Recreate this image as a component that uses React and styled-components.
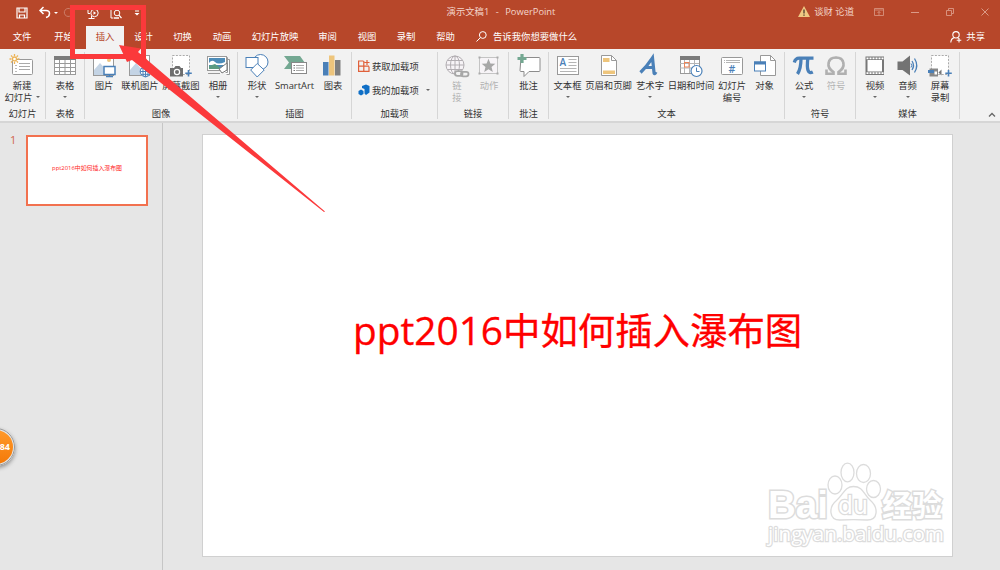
import React from "react";
import styled, { createGlobalStyle } from "styled-components";

const Colors = {
  brand: "#b7472a",
  ribbon: "#f2f2f2",
  canvas: "#e6e6e6",
  line: "#d6d6d6",
  text: "#333",
  muted: "#b3b3b3",
  blue: "#4a80b8",
  grey: "#7c7c7c",
  gold: "#eec57c",
  green: "#74a892",
  mark: "#fb393b",
};

const GlobalStyle = createGlobalStyle`
  * {
    box-sizing: border-box;
  }

  body {
    margin: 0;
    overflow: hidden;
    font-family: "Open Sans", "Noto Sans CJK SC", sans-serif;
    font-size: 9.35px;
    color: ${Colors.text};
  }

  svg {
    display: block;
    flex: none;
    overflow: visible;
  }
`;

const Window = styled.div`
  position: relative;
  display: flex;
  flex-direction: column;
  width: 1000px;
  height: 570px;
  overflow: hidden;
  background: ${Colors.canvas};
`;

const Header = styled.header`
  height: 49px;
  background: ${Colors.brand};
  color: #fff;
`;

const TitleBar = styled.div`
  display: grid;
  grid-template-columns: 1fr auto 1fr;
  height: 26px;
  padding: 0 11px 3px 16px;
  align-items: center;
`;

const QuickAccess = styled.div`
  display: flex;
  align-items: center;
  height: 26px;
`;

const QuickIcon = styled.div`
  margin-left: ${(p) => p.$gap || 0}px;
  opacity: ${(p) => (p.$faint ? 0.3 : 1)};
`;

const DocTitle = styled.div`
  padding: 0 3px 3px 0;
  color: #f3d5cb;
  white-space: pre;
  line-height: 22px;
  word-spacing: 0.8px;
`;

const WindowControls = styled.div`
  display: flex;
  justify-content: flex-end;
  align-items: center;
  color: #db9a87;
`;

const User = styled.div`
  display: flex;
  align-items: center;
  gap: 4px;
  margin-right: 20px;
  padding-bottom: 3px;
  color: #f3d5cb;
  line-height: 22px;
  white-space: nowrap;
`;

const Control = styled.div`
  margin-left: ${(p) => p.$gap || 0}px;
  padding-bottom: 2px;
`;

const Tabs = styled.nav`
  display: flex;
  height: 23px;
  padding-left: 3px;
  line-height: 22px;
`;

const Tab = styled.div`
  width: ${(p) => p.$w}px;
  text-align: center;
  white-space: nowrap;
  color: ${(p) => (p.$active ? Colors.brand : "#fff")};
  background: ${(p) => (p.$active ? Colors.ribbon : "transparent")};
`;

const TellMe = styled.div`
  display: flex;
  align-items: center;
  gap: 6px;
  margin-left: 10px;
  height: 21px;
`;

const Share = styled(TellMe)`
  gap: 4px;
  margin-left: auto;
  margin-right: 15px;
`;

const RibbonBar = styled.section`
  display: flex;
  height: 74px;
  padding-top: 3px;
  background: ${Colors.ribbon};
  border-bottom: 2px solid ${Colors.line};
`;

const Group = styled.div`
  display: flex;
  flex-direction: column;
  width: ${(p) => p.$w}px;
  height: 67px;
  border-right: 1px solid ${Colors.line};
`;

const GroupBody = styled.div`
  display: flex;
  flex: 1;
  padding-left: ${(p) => p.$pad || 0}px;
`;

const GroupName = styled.div`
  height: 14px;
  line-height: 14px;
  margin-bottom: -2px;
  text-align: center;
`;

const Button = styled.div`
  display: flex;
  flex-direction: column;
  align-items: center;
  width: ${(p) => p.$w}px;
  padding-top: 2px;
  color: ${(p) => (p.$disabled ? Colors.muted : Colors.text)};
`;

const Label = styled.div`
  display: flex;
  align-items: center;
  justify-content: center;
  height: 11.5px;
  line-height: 11.5px;
  white-space: nowrap;
  margin-top: ${(p) => (p.$first ? 2 : 0)}px;
`;

const Caret = styled.span`
  border: 2.5px solid transparent;
  border-top-color: ${(p) => (p.$light ? "#fff" : "#666")};
  border-bottom: 0;
  margin-left: ${(p) => p.$gap || 0}px;
`;

const AddIns = styled.div`
  display: flex;
  flex-direction: column;
  padding: 2.5px 0 0 6px;
`;

const AddIn = styled.div`
  display: flex;
  align-items: center;
  gap: 2px;
  height: 23.6px;
  white-space: nowrap;
`;

const RibbonEnd = styled.div`
  display: flex;
  flex: 1;
  justify-content: flex-end;
  align-items: flex-end;
  padding: 0 4px 4px 0;
`;

const Workspace = styled.main`
  display: flex;
  flex: 1;
`;

const Thumbnails = styled.aside`
  display: flex;
  width: 163px;
  padding: 12px 0 0 9px;
  border-right: 1px solid #c6c6c6;
`;

const SlideNumber = styled.div`
  width: 17px;
  padding-left: 1px;
  font-size: 11px;
  line-height: 10px;
  color: #d0654c;
`;

const Thumb = styled.div`
  width: 122px;
  height: 71px;
  border: 2px solid #f2714f;
  background: #fff;
  color: #ff2525;
  font-size: 5.9px;
  line-height: 63px;
  text-align: center;
  white-space: nowrap;
`;

const Stage = styled.div`
  flex: 1;
  padding: 11px 0 0 39px;
`;

const Slide = styled.div`
  position: relative;
  width: 751px;
  height: 423px;
  border: 1px solid #d0d0d0;
  background: #fff;
`;

const SlideTitle = styled.h1`
  margin: 0;
  padding: 168px 0 0 150px;
  font-size: 37.4px;
  font-weight: 400;
  line-height: 54px;
  color: #f00;
  white-space: nowrap;
  -webkit-text-stroke: 0.3px #f00;
`;

const Latin = styled.span`
  font-size: 38.8px;
`;

const Watermark = styled.svg`
  position: absolute;
  left: 557px;
  top: 321px;
`;

const Badge = styled.div`
  position: absolute;
  left: -23px;
  top: 428px;
  width: 38px;
  height: 38px;
  padding-right: 3px;
  border: 2px solid #e5e5e5;
  border-radius: 50%;
  outline: 1px solid #999;
  outline-offset: -1px;
  background: linear-gradient(#ff9a2b, #f47908);
  box-shadow: 0 2px 4px rgba(0, 0, 0, 0.4);
  color: #fff;
  font-size: 9px;
  font-weight: 700;
  line-height: 33px;
  text-align: right;
`;

const Overlay = styled.svg`
  position: absolute;
  left: 0;
  top: 0;
`;

const Icon = ({ children }) => (
  <svg width="24" height="24" viewBox="0 0 24 24" fill="none">
    {children}
  </svg>
);

const frame = { fill: "#fff", stroke: "#999" };
const blueLine = { stroke: Colors.blue, fill: "#fff" };

const icons = {
  newSlide: (
    <Icon>
      <rect x="2.5" y="5.5" width="20" height="15" rx="1" {...frame} />
      <path d="M9 9.5h11M9 12.5h11M9 15.5h11" stroke="#aaa" />
      <path d="M5 11.5h2M5 14.5h2M5 17.5h2" stroke="#bbb" />
      <circle cx="4.5" cy="5" r="2" fill="#fff" stroke="#edb355" strokeWidth="1.3" />
      <path d="M4.5 0v2M4.5 8v2M-.5 5h2M7.5 5h2M1 1.5l1.4 1.4M8 1.5L6.6 2.9M1 8.5l1.4-1.4M8 8.5L6.6 7.1" stroke="#edb355" strokeWidth="1.3" />
    </Icon>
  ),
  table: (
    <Icon>
      <rect x="1.5" y="2.5" width="21" height="18" {...frame} />
      <path d="M1 2h22v4H1z" fill={Colors.grey} />
      <path d="M1 9.5h22M1 13.5h22M1 17.5h22M6.5 6v14M12 6v14M17.5 6v14" stroke="#999" />
    </Icon>
  ),
  picture: (
    <Icon>
      <rect x="1.5" y="1.5" width="20" height="20" {...frame} />
      <circle cx="17" cy="6" r="2" fill={Colors.gold} />
      <path d="M2 21v-5l6-7 8 9v3z" fill="#c4d4e5" />
      <rect x="12" y="12.5" width="11" height="8" {...blueLine} strokeWidth="1.5" />
      <path d="M17.5 20.5v2M14 22.7h7" stroke={Colors.blue} strokeWidth="1.3" />
    </Icon>
  ),
  onlinePicture: (
    <Icon>
      <rect x="1.5" y="1.5" width="20" height="20" {...frame} />
      <circle cx="17" cy="6" r="2" fill={Colors.gold} />
      <path d="M2 21v-5l6-7 8 9v3z" fill="#c4d4e5" />
      <circle cx="17.5" cy="17.5" r="5.3" {...blueLine} />
      <path d="M12.3 17.5h10.5M17.5 12.5v10M13 14.7h9M13 20.3h9" stroke={Colors.blue} />
      <ellipse cx="17.5" cy="17.5" rx="2.6" ry="5.2" stroke={Colors.blue} />
    </Icon>
  ),
  screenshot: (
    <Icon>
      <path d="M3.5 1.5h17v19h-17z" fill="#fff" stroke="#aaa" strokeDasharray="2 1.4" />
      <path d="M1 14h4l1.5-2h4l1.5 2h2v8.5H1z" fill="#6e6e6e" />
      <circle cx="8" cy="18" r="2.6" stroke="#fff" strokeWidth="1.2" />
      <path d="M19.5 16v6.5M16.3 19.2h6.5" stroke={Colors.blue} strokeWidth="1.6" />
    </Icon>
  ),
  album: (
    <Icon>
      <path d="M5.5 5.5h18v15h-3" {...frame} />
      <path d="M3.5 3.5h18v15h-2" {...frame} />
      <rect x="1.5" y="2.5" width="19" height="14" {...frame} />
      <rect x="3" y="4" width="16" height="11" fill="#4d8cb8" />
      <path d="M3 9q3-4 6-1t10 0v3H3z" fill="#fff" />
      <path d="M3 15v-3l6-2 7 5z" fill="#5a9a80" />
      <path d="M13 15l8-6v7l-5 3z" fill="#fff" stroke="#777" />
      <path d="M2 19.5h12" stroke="#999" />
    </Icon>
  ),
  shapes: (
    <Icon>
      <circle cx="15.5" cy="8" r="7.5" {...blueLine} />
      <rect x="1" y="3.5" width="12" height="10" {...blueLine} />
      <path d="M12.2 9.5l7 6.5-7 7-6.5-7z" {...blueLine} />
    </Icon>
  ),
  smartArt: (
    <Icon>
      <path d="M1 2h16l5 7-4 6H1l5-6.5z" fill={Colors.green} />
      <rect x="8.5" y="8.5" width="15" height="11" {...frame} stroke="#888" />
      <path d="M13 11.5h8M13 14h8M13 16.5h8" stroke="#aaa" />
      <path d="M10.5 11.5h1.5M10.5 14h1.5M10.5 16.5h1.5" stroke="#777" />
    </Icon>
  ),
  chart: (
    <Icon>
      <path d="M2 8h5.5v13.5H2z" fill={Colors.blue} />
      <path d="M8 1.5h5.5v20H8z" fill={Colors.gold} />
      <path d="M14 6h5.5v15.5H14z" fill="#808080" />
    </Icon>
  ),
  link: (
    <Icon>
      <circle cx="10" cy="11" r="9" stroke="#b2aeb2" fill="#f7f4f7" />
      <path d="M1 11h18M10 2v18M2.5 6.5h15M2.5 15.5h15" stroke="#b2aeb2" />
      <ellipse cx="10" cy="11" rx="4.5" ry="9" stroke="#b2aeb2" />
      <rect x="10" y="17.2" width="7.5" height="4.6" rx="2.3" fill="#f2f2f2" stroke="#a7a7a7" strokeWidth="1.8" />
      <rect x="16" y="17.8" width="7.5" height="4.6" rx="2.3" stroke="#a7a7a7" strokeWidth="1.8" />
    </Icon>
  ),
  action: (
    <Icon>
      <rect x="2.5" y="3.5" width="18" height="16" fill="#f7f4f7" stroke="#c4c4c4" />
      <path d="M1.5 2.5h2v2h-2zM19.5 2.5h2v2h-2zM1.5 18.5h2v2h-2zM19.5 18.5h2v2h-2z" fill="#aaa" />
      <path d="M11.5 4.8l1.900 4.700 4.900.3-3.800 3.200 1.300 4.900-4.300-2.700-4.300 2.700 1.300-4.900-3.800-3.200 4.900-.3z" fill="#a7a7a7" />
    </Icon>
  ),
  comment: (
    <Icon>
      <path d="M4 3.5h18q1 0 1 1v12q0 1-1 1H12l-5 5v-5H4q-1 0-1-1z" {...frame} stroke="#8c8c8c" />
      <path d="M5 0v9M.5 4.5h9" stroke={Colors.green} strokeWidth="3.2" />
    </Icon>
  ),
  textBox: (
    <Icon>
      <rect x="1.5" y="2.5" width="21" height="18" {...frame} />
      <text x="3.5" y="12" fontSize="10" fontWeight="600" fill={Colors.blue}>A</text>
      <path d="M12.5 5.5h8M12.5 8.5h8M12.5 11.5h8M4 14.5h16.5M4 17.5h16.5" stroke="#b5b5b5" />
    </Icon>
  ),
  headerFooter: (
    <Icon>
      <path d="M4.5 1.5h10l5 5v15h-15z" {...frame} />
      <path d="M14.5 1.5v5h5" stroke="#999" />
      <path d="M6 4h6.5v4H6zM6 16.5h12v3.5H6z" fill={Colors.gold} />
    </Icon>
  ),
  wordArt: (
    <Icon>
      <path d="M2.5 18.5Q9 12 14.5 3.8L16 18.5q.3 2.5 2-.5M6.5 13.5h9" stroke={Colors.blue} strokeWidth="3.2" />
    </Icon>
  ),
  dateTime: (
    <Icon>
      <rect x="1.5" y="2.5" width="19" height="17" {...frame} />
      <path d="M1 2h20v4H1z" fill={Colors.grey} />
      <path d="M1 9.5h19M1 14h19M5.5 6v13M10.5 6v13M15.5 6v13" stroke="#b5b5b5" />
      <rect x="5.5" y="8.5" width="4.5" height="4.5" stroke="#ec8558" />
      <circle cx="17.5" cy="17" r="5.5" {...blueLine} strokeWidth="1.2" />
      <path d="M17.5 13.5v4h3" stroke={Colors.blue} />
    </Icon>
  ),
  slideNumber: (
    <Icon>
      <rect x="1.5" y="3.5" width="21" height="17" rx="1" {...frame} />
      <path d="M4 6.5h1M6 6.5h14M4 8.5h1M6 8.5h14" stroke="#b5b5b5" />
      <text x="8.5" y="18.5" fontSize="10.5" fontWeight="600" fill={Colors.blue}>#</text>
    </Icon>
  ),
  object: (
    <Icon>
      <path d="M7.5 1.5h10l5 5v15h-15z" {...frame} />
      <path d="M17.5 1.5v5h5" stroke="#999" />
      <rect x="1.5" y="8" width="11" height="9" {...blueLine} />
      <path d="M1 7.5h12v3H1z" fill={Colors.blue} />
    </Icon>
  ),
  equation: (
    <Icon>
      <path d="M2.3 8.5Q3.5 4 7.5 4.2H21.5M9 4.500q0 10-3.500 15.500M15.800 4.500q-2 17 5 13.500" stroke={Colors.blue} strokeWidth="3.300" />
    </Icon>
  ),
  symbol: (
    <Icon>
      <path d="M2.5 15.5v4.2h7V18C1.5 13 3.5 3.5 12 3.5s10.500 9.500 2.500 14.500v1.700h7v-4.200" stroke="#b0b0b0" strokeWidth="2.6" />
      <path d="M5 10q0-6 7-6.500M19 10q0-6-7-6.500" stroke="#b0b0b0" strokeWidth="1.5" />
    </Icon>
  ),
  video: (
    <Icon>
      <path d="M2.5 2.5H21V21H2.5z" fill="#777" />
      <path d="M4.5 6h14.500v11.500H4.500z" fill="#fff" />
      <path d="M3.5 4.300h17M3.500 19.200h17" stroke="#fff" strokeWidth="1.800" strokeDasharray="2 1" />
    </Icon>
  ),
  audio: (
    <Icon>
      <path d="M1.5 7.5h5L14 1.5v20L6.5 16h-5z" fill="#737373" />
      <path d="M16 7q3 4.500 0 9M18.500 4.500q4.500 7 0 14" stroke={Colors.blue} strokeWidth="1.3" />
      <path d="M15 9.500q1.500 2 0 4" stroke={Colors.blue} />
    </Icon>
  ),
  recording: (
    <Icon>
      <path d="M3.5 1.5h17v19h-17z" fill="#fff" stroke="#aaa" strokeDasharray="2 1.4" />
      <path d="M1.500 14.500h8.500v8H1.500z" fill="#888" />
      <path d="M0 16h6v3H0z" fill={Colors.blue} />
      <path d="M6.500 17.500h2.500v3H6.500z" fill="#fff" />
      <path d="M10.500 18.500l3-3v6z" fill="#777" />
      <path d="M20.500 16v6.500M17.300 19.200h6.500" stroke={Colors.blue} strokeWidth="1.6" />
    </Icon>
  ),
};

const tabs = [
  ["文件", 38],
  ["开始", 45],
  ["插入", 38, true],
  ["设计", 39],
  ["切换", 39],
  ["动画", 40],
  ["幻灯片放映", 66],
  ["审阅", 39],
  ["视图", 40],
  ["录制", 38],
  ["帮助", 41],
];

// "v" as the second line draws the drop-down arrow on its own
const groups = [
  { name: "幻灯片", w: 46, items: [["newSlide", 44, "新建", "幻灯片", "v"]] },
  { name: "表格", w: 39, items: [["table", 38, "表格", "v"]] },
  {
    name: "图像",
    w: 153,
    pad: 5,
    items: [
      ["picture", 28, "图片"],
      ["onlinePicture", 44, "联机图片"],
      ["screenshot", 38, "屏幕截图"],
      ["album", 36, "相册", "v"],
    ],
  },
  {
    name: "插图",
    w: 114,
    pad: 2,
    items: [
      ["shapes", 34, "形状", "v"],
      ["smartArt", 41, "SmartArt"],
      ["chart", 36, "图表"],
    ],
  },
  { name: "加载项", w: 86, addIns: true },
  {
    name: "链接",
    w: 71,
    pad: 3,
    items: [
      ["link", 32, "链", "接", null, true],
      ["action", 32, "动作", null, null, true],
    ],
  },
  { name: "批注", w: 40, items: [["comment", 39, "批注"]] },
  {
    name: "文本",
    w: 236,
    pad: 2,
    items: [
      ["textBox", 33, "文本框", "v"],
      ["headerFooter", 49, "页眉和页脚"],
      ["wordArt", 34, "艺术字", "v"],
      ["dateTime", 48, "日期和时间"],
      ["slideNumber", 34, "幻灯片", "编号"],
      ["object", 31, "对象"],
    ],
  },
  {
    name: "符号",
    w: 71,
    pad: 3,
    items: [
      ["equation", 32, "公式", "v"],
      ["symbol", 32, "符号", null, null, true],
    ],
  },
  {
    name: "媒体",
    w: 104,
    pad: 3,
    items: [
      ["video", 32, "视频", "v"],
      ["audio", 33, "音频", "v"],
      ["recording", 32, "屏幕", "录制"],
    ],
  },
];

const RibbonButton = ({ item }) => {
  const [icon, w, first, second, arrow, disabled] = item;
  return (
    <Button $w={w} $disabled={disabled}>
      {icons[icon]}
      <Label $first>{first}</Label>
      {second && (
        <Label>
          {second === "v" ? <Caret /> : second}
          {arrow && <Caret $gap={3} />}
        </Label>
      )}
    </Button>
  );
};

const AddInButtons = () => (
  <AddIns>
    <AddIn>
      <svg width="12" height="12" viewBox="0 0 12 12" fill="none" stroke="#e0603a" strokeWidth="1.2">
        <path d="M5.500 1H.6v10.400H11V6.500M.6 6.200H11M5.800 1v10.400M9 0v5M6.500 2.500h5" />
      </svg>
      获取加载项
    </AddIn>
    <AddIn>
      <svg width="12" height="12" viewBox="0 0 12 12">
        <path d="M4 2l4-1.500L11.500 2v6.500L8 11 6.500 9.500V5L4 4z" fill="#0f6fc6" />
        <path d="M.5 7l2.500-1.500L5.500 7v3L3 11.500.5 10z" fill="#0f6fc6" />
      </svg>
      我的加载项
      <Caret $gap={5} />
    </AddIn>
  </AddIns>
);

const Ribbon = () => (
  <RibbonBar>
    {groups.map((g) => (
      <Group key={g.name} $w={g.w}>
        <GroupBody $pad={g.pad}>
          {g.addIns ? <AddInButtons /> : g.items.map((item) => <RibbonButton key={item[0]} item={item} />)}
        </GroupBody>
        <GroupName>{g.name}</GroupName>
      </Group>
    ))}
    <RibbonEnd>
      <svg width="8" height="5" viewBox="0 0 8 5" fill="none" stroke="#666" strokeWidth="1.3">
        <path d="M1 4.500l3-3 3 3" />
      </svg>
    </RibbonEnd>
  </RibbonBar>
);

const QuickAccessIcons = () => (
  <QuickAccess>
    <QuickIcon>
      <svg width="12" height="12" viewBox="0 0 12 12" fill="none" stroke="#fff" strokeWidth="1.2">
        <path d="M1 1h10v10H1zM3 1v4h6V1M3.500 11V8h5v3" />
      </svg>
    </QuickIcon>
    <QuickIcon $gap={11}>
      <svg width="12" height="12" viewBox="0 0 12 12" fill="none" stroke="#fff" strokeWidth="1.5">
        <path d="M4.500 0L1 3.500 4.500 7M1 3.500h6q3.500 0 3.500 3T7 10.500" />
      </svg>
    </QuickIcon>
    <QuickIcon $gap={3}>
      <Caret as="div" $light />
    </QuickIcon>
    <QuickIcon $gap={5} $faint>
      <svg width="10" height="10" viewBox="0 0 10 10" fill="none" stroke="#fff">
        <path d="M8 1.500A4 4 0 1 0 9 6" />
      </svg>
    </QuickIcon>
    <QuickIcon $gap={14}>
      <svg width="12" height="12" viewBox="0 0 12 12" fill="none" stroke="#fff">
        <path d="M1 1v5.500h2M4.500 9v2.500M1.500 11.500h6" />
        <circle cx="7.500" cy="6" r="3.700" />
        <path d="M6.500 4.300v3.400l2.600-1.700z" fill="#fff" stroke="none" />
      </svg>
    </QuickIcon>
    <QuickIcon $gap={11}>
      <svg width="12" height="12" viewBox="0 0 12 12" fill="none" stroke="#fff">
        <path d="M3.500 11H1V1h9.500v2" />
        <circle cx="7" cy="6" r="2.800" />
        <path d="M9 8.200l2.500 3M4 11h5" strokeWidth="1.3" />
      </svg>
    </QuickIcon>
    <QuickIcon $gap={12}>
      <svg width="6" height="6" viewBox="0 0 6 6">
        <path d="M1 .5h4v1H1zM.5 3h5L3 5.500z" fill="#fff" />
      </svg>
    </QuickIcon>
  </QuickAccess>
);

const BaiduMark = () => (
  <Watermark width="190" height="90" viewBox="760 456 190 90" fill="#fff" stroke="#dcdcdc" strokeWidth="1.3">
    <g strokeWidth="3" paintOrder="stroke" fontFamily="Liberation Sans, sans-serif" fontWeight="700">
      <text x="768" y="518" fontSize="38" textLength="60" lengthAdjust="spacingAndGlyphs">Bai</text>
      <text x="882" y="516" fontSize="30" fontFamily="Noto Sans CJK SC, sans-serif" textLength="60" lengthAdjust="spacingAndGlyphs">经验</text>
    </g>
    <ellipse cx="835" cy="485" rx="7" ry="9" />
    <ellipse cx="847.500" cy="472.500" rx="6.500" ry="9.300" />
    <ellipse cx="863.500" cy="473.500" rx="7" ry="9" />
    <ellipse cx="873.500" cy="489" rx="7" ry="8.500" />
    <path d="M853.500 486.500c10 0 10 8 17 14 8 7 8 20-4 19.500-8-.5-18-.5-26 0-12 .5-12-13-4-19.500 7-6 8-14 17-14z" />
    <text x="838" y="514" fontSize="24" strokeWidth="2.600" paintOrder="stroke" fontFamily="DejaVu Sans, sans-serif" textLength="30" lengthAdjust="spacingAndGlyphs">du</text>
    <text x="768" y="541" fontSize="20" strokeWidth="2.400" paintOrder="stroke" fontFamily="Open Sans, sans-serif" textLength="176" lengthAdjust="spacingAndGlyphs">jingyan.baidu.com</text>
  </Watermark>
);

const App = () => (
  <>
    <GlobalStyle />
    <Window>
      <Header>
        <TitleBar>
          <QuickAccessIcons />
          <DocTitle>{"演示文稿1  -  PowerPoint"}</DocTitle>
          <WindowControls>
            <User>
              <svg width="12" height="11" viewBox="0 0 12 11">
                <path d="M6 0l6 11H0z" fill="#efc883" />
                <path d="M5.300 3.500h1.400v4H5.300zM5.300 8.400h1.400v1.400H5.300z" fill="#543" />
              </svg>
              谈财 论道
            </User>
            <Control>
              <svg width="10" height="8" viewBox="0 0 10 8" fill="none" stroke="currentColor">
                <path d="M.5.5h9v7h-9zM.5 2h9M5 7V3.500M3.500 5L5 3.500 6.500 5" strokeWidth=".8" />
              </svg>
            </Control>
            <Control $gap={27}>
              <svg width="8" height="8" viewBox="0 0 8 8" stroke="currentColor">
                <path d="M0 4.500h8" />
              </svg>
            </Control>
            <Control $gap={27}>
              <svg width="8" height="8" viewBox="0 0 8 8" fill="none" stroke="currentColor">
                <path d="M.5 2.500h5v5h-5zM2.500 2V.5h5v5H6" strokeWidth=".9" />
              </svg>
            </Control>
            <Control $gap={27}>
              <svg width="8" height="8" viewBox="0 0 8 8" stroke="currentColor">
                <path d="M.5.5l7 7M7.500.5l-7 7" />
              </svg>
            </Control>
          </WindowControls>
        </TitleBar>
        <Tabs>
          {tabs.map(([name, w, active]) => (
            <Tab key={name} $w={w} $active={active}>
              {name}
            </Tab>
          ))}
          <TellMe>
            <svg width="11" height="11" viewBox="0 0 11 11" fill="none" stroke="#fff">
              <circle cx="6.800" cy="4" r="3.400" />
              <path d="M4.500 6.500L.5 10.500" />
            </svg>
            告诉我你想要做什么
          </TellMe>
          <Share>
            <svg width="12" height="12" viewBox="0 0 12 12" fill="none" stroke="#fff" strokeWidth="1.1">
              <circle cx="6" cy="3.800" r="3.200" />
              <path d="M.8 11.500Q1 7.500 4.300 6.600M7.500 6.600l1.500 1M9 7v4.500M6.700 9.300h4.600" />
            </svg>
            共享
          </Share>
        </Tabs>
      </Header>
      <Ribbon />
      <Workspace>
        <Thumbnails>
          <SlideNumber>1</SlideNumber>
          <Thumb>ppt2016中如何插入瀑布图</Thumb>
        </Thumbnails>
        <Stage>
          <Slide>
            <SlideTitle>
              <Latin>ppt2016</Latin>中如何插入瀑布图
            </SlideTitle>
            <BaiduMark />
          </Slide>
        </Stage>
      </Workspace>
      <Badge>84</Badge>
      <Overlay width="340" height="220" viewBox="0 0 340 220">
        <rect x="72.500" y="7.500" width="71" height="49" fill="none" stroke={Colors.mark} strokeWidth="5" />
        <path d="M119 45L141 48.500L138 52L325 211.500L324 212L132 60L127 62z" fill={Colors.mark} />
      </Overlay>
    </Window>
  </>
);

export default App;
